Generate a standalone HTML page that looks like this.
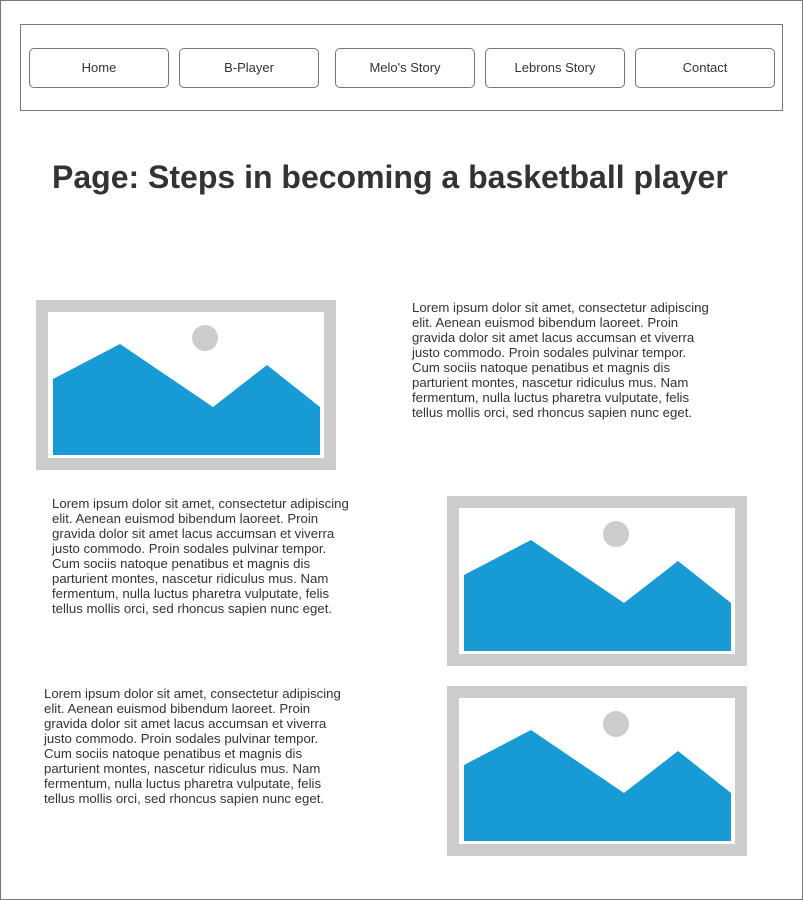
<!DOCTYPE html>
<html><head><style>
body{margin:0;width:803px;height:900px;position:relative;font-family:"Liberation Sans",sans-serif;background:#fff;overflow:hidden}
.frame{position:absolute;left:0;top:0;width:801px;height:898px;border:1px solid #777}
.nav{position:absolute;left:20px;top:24px;width:761px;height:85px;border:1px solid #777}
.btn{position:absolute;top:48px;width:138px;height:38px;border:1px solid #777;border-radius:5px;font-size:13px;color:#333;text-align:center;line-height:38px}
h1{position:absolute;left:52px;top:159px;margin:0;font-size:32px;font-weight:bold;color:#333;white-space:nowrap}
.t{position:absolute;font-size:13.2px;line-height:15px;color:#333;white-space:nowrap}
svg{position:absolute}
</style></head><body>
<div class="frame"></div>
<div class="nav"></div>
<div class="btn" style="left:29px">Home</div>
<div class="btn" style="left:179px">B-Player</div>
<div class="btn" style="left:335px">Melo's Story</div>
<div class="btn" style="left:485px">Lebrons Story</div>
<div class="btn" style="left:635px">Contact</div>
<h1>Page: Steps in becoming a basketball player</h1>

<svg style="left:36px;top:300px" width="300" height="170"><rect x="6" y="6" width="288" height="158" fill="#fff" stroke="#ccc" stroke-width="12"/><circle cx="169" cy="38" r="13" fill="#ccc"/><polygon points="17,79 84,44 177,107 231,65 284,107 284,155 17,155" fill="#189bd5"/></svg>
<svg style="left:447px;top:496px" width="300" height="170"><rect x="6" y="6" width="288" height="158" fill="#fff" stroke="#ccc" stroke-width="12"/><circle cx="169" cy="38" r="13" fill="#ccc"/><polygon points="17,79 84,44 177,107 231,65 284,107 284,155 17,155" fill="#189bd5"/></svg>
<svg style="left:447px;top:686px" width="300" height="170"><rect x="6" y="6" width="288" height="158" fill="#fff" stroke="#ccc" stroke-width="12"/><circle cx="169" cy="38" r="13" fill="#ccc"/><polygon points="17,79 84,44 177,107 231,65 284,107 284,155 17,155" fill="#189bd5"/></svg>

<div class="t" style="left:412px;top:300px">Lorem ipsum dolor sit amet, consectetur adipiscing<br>elit. Aenean euismod bibendum laoreet. Proin<br>gravida dolor sit amet lacus accumsan et viverra<br>justo commodo. Proin sodales pulvinar tempor.<br>Cum sociis natoque penatibus et magnis dis<br>parturient montes, nascetur ridiculus mus. Nam<br>fermentum, nulla luctus pharetra vulputate, felis<br>tellus mollis orci, sed rhoncus sapien nunc eget.</div>
<div class="t" style="left:52px;top:496px">Lorem ipsum dolor sit amet, consectetur adipiscing<br>elit. Aenean euismod bibendum laoreet. Proin<br>gravida dolor sit amet lacus accumsan et viverra<br>justo commodo. Proin sodales pulvinar tempor.<br>Cum sociis natoque penatibus et magnis dis<br>parturient montes, nascetur ridiculus mus. Nam<br>fermentum, nulla luctus pharetra vulputate, felis<br>tellus mollis orci, sed rhoncus sapien nunc eget.</div>
<div class="t" style="left:44px;top:686px">Lorem ipsum dolor sit amet, consectetur adipiscing<br>elit. Aenean euismod bibendum laoreet. Proin<br>gravida dolor sit amet lacus accumsan et viverra<br>justo commodo. Proin sodales pulvinar tempor.<br>Cum sociis natoque penatibus et magnis dis<br>parturient montes, nascetur ridiculus mus. Nam<br>fermentum, nulla luctus pharetra vulputate, felis<br>tellus mollis orci, sed rhoncus sapien nunc eget.</div>
</body></html>
